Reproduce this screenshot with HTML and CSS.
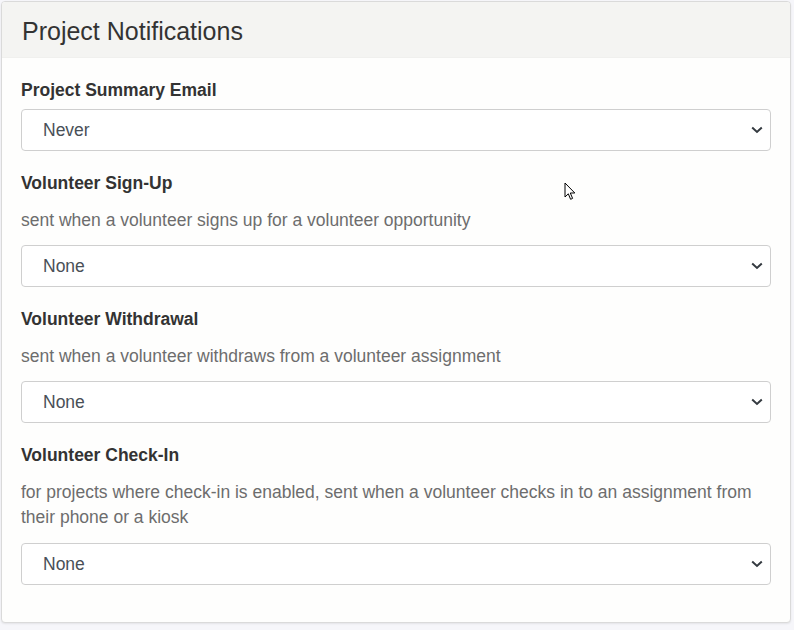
FILE: index.html
```html
<!DOCTYPE html>
<html>
<head>
<meta charset="utf-8">
<link rel="stylesheet" href="styles.css">
</head>
<body>
<div class="card">
  <div class="card-header"><h4 class="title">Project Notifications</h4></div>
  <div class="card-body">
    <div class="group">
      <label class="label">Project Summary Email</label>
      <select class="select"><option>Never</option></select>
    </div>
    <div class="group">
      <label class="label">Volunteer Sign-Up</label>
      <p class="desc">sent when a volunteer signs up for a volunteer opportunity</p>
      <select class="select"><option>None</option></select>
    </div>
    <div class="group">
      <label class="label">Volunteer Withdrawal</label>
      <p class="desc">sent when a volunteer withdraws from a volunteer assignment</p>
      <select class="select"><option>None</option></select>
    </div>
    <div class="group">
      <label class="label">Volunteer Check-In</label>
      <p class="desc desc-last">for projects where check-in is enabled, sent when a volunteer checks in to an assignment from their phone or a kiosk</p>
      <select class="select"><option>None</option></select>
    </div>
  </div>
</div>
<svg class="cursor" width="13" height="20" viewBox="0 0 13 20"><path d="M1 1 L1 15 L4.3 11.8 L6.6 17.3 L8.6 16.4 L6.3 11 L10.8 11 Z" fill="#fff" stroke="#000" stroke-width="1" stroke-linejoin="miter"/></svg>
</body>
</html>
```

FILE: styles.css
```css
html, body {
  margin: 0;
  padding: 0;
}
body {
  background: #f6f6fa;
  font-family: "Liberation Sans", Arial, sans-serif;
  color: #212529;
  padding: 1px 3px 0 1px;
  height: 630px;
  box-sizing: border-box;
  position: relative;
}
.card {
  background: #fefefd;
  border: 1px solid #dadada;
  border-radius: 4px;
  box-shadow: 0 1px 2px rgba(0,0,0,0.08);
  height: 622px;
  box-sizing: border-box;
  overflow: hidden;
}
.card-header {
  background: #f4f4f2;
  height: 56px;
  padding: 0 20px;
  display: flex;
  align-items: center;
  border-bottom: 1px solid #f0f0ee;
  box-sizing: border-box;
}
.title {
  margin: 0;
  font-size: 25px;
  font-weight: 400;
  color: #333;
  line-height: 30px;
  padding-top: 3px;
}
.card-body {
  padding: 19px 19px 0 19px;
}
.group {
  display: flex;
  flex-direction: column;
  margin-bottom: 19px;
}
.label {
  font-weight: 700;
  font-size: 17.5px;
  line-height: 24px;
  color: #333;
  margin-bottom: 7px;
  padding-top: 1px;
}
.desc {
  margin: 6px 0 12px 0;
  font-size: 17.5px;
  line-height: 25px;
  color: #6d6d6d;
}
.desc-last {
  margin-bottom: 13px;
}
.select {
  appearance: none;
  -webkit-appearance: none;
  height: 42px;
  width: 100%;
  box-sizing: border-box;
  border: 1px solid #cfcfcf;
  border-radius: 4px;
  background-color: #fff;
  background-image: url("data:image/svg+xml,%3Csvg xmlns='http://www.w3.org/2000/svg' width='12' height='8' viewBox='0 0 12 8'%3E%3Cpath d='M1.2 1.5 L6 6 L10.8 1.5' fill='none' stroke='%23343a40' stroke-width='2'/%3E%3C/svg%3E");
  background-repeat: no-repeat;
  background-position: right 7px center;
  background-size: 12px 8px;
  font-family: "Liberation Sans", Arial, sans-serif;
  font-size: 17.5px;
  color: #495057;
  padding: 0 30px 0 21px;
}
.cursor {
  position: absolute;
  left: 564px;
  top: 182px;
}
```
